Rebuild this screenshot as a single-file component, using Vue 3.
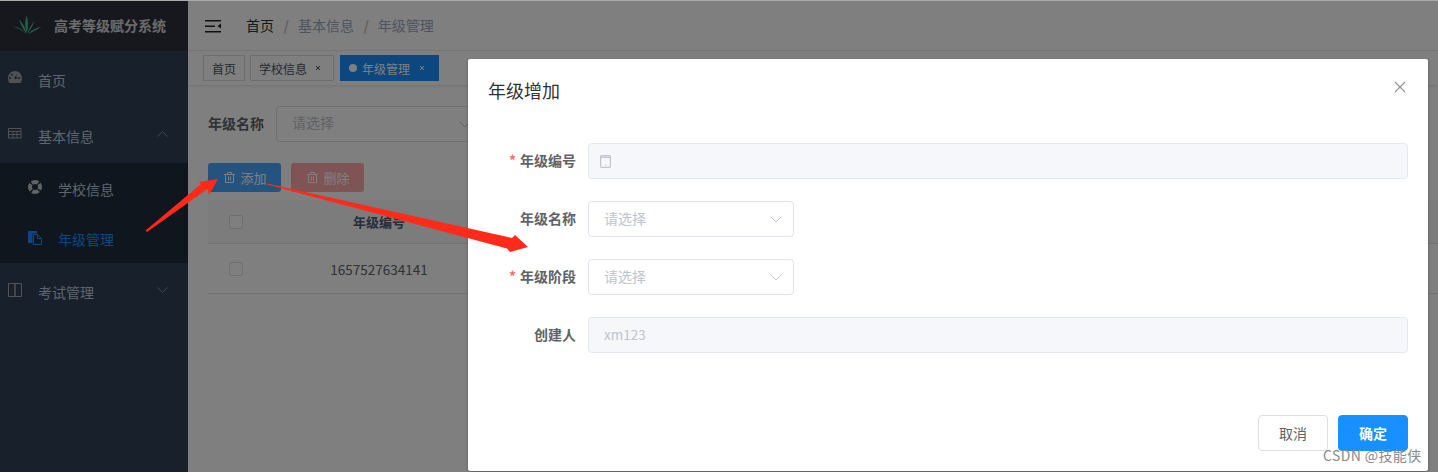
<script setup>
const crumbs = ['基本信息', '年级管理']
</script>

<template>
  <div class="page">
    <aside class="side">
      <div class="logo">
        <svg class="logo-mark" width="30" height="20" viewBox="0 0 30 20">
          <g fill="#46c898">
            <path d="M15 18C12.500 11 13 6 14.800 .5 16 6 16.500 11 15 18Z" />
            <path d="M14.500 18.500C11 14 9 10 7 4.500 10.500 8.500 13.500 12 14.500 18.500Z" />
            <path d="M15.500 18.500C17 13 19.500 10 22.500 5.500 21 10.500 18.500 14.500 15.500 18.500Z" />
            <path d="M14 19C10 15 6 12.500 0 11.500 6 11.500 11 14.500 14 19Z" />
            <path d="M16 19C20 15 24 12.500 29.500 12 24.500 14.500 20.500 17 16 19Z" />
          </g>
        </svg>
        <span class="logo-text">高考等级赋分系统</span>
      </div>
      <nav class="nav">
        <div class="item">
          <svg class="ico" width="14" height="12" viewBox="0 0 14 12"><path fill="#a0a4ab" fill-rule="evenodd" d="M7 0a7 7 0 0 1 7 7c0 1.800-.5 3.500-1.500 5H1.500A7.500 7.500 0 0 1 0 7a7 7 0 0 1 7-7ZM7.800 5.500 9.500 2.500 6.500 6.200a1.300 1.300 0 1 0 1.300-.7ZM2.500 6.200a1 1 0 1 0 0 1.800 1 1 0 0 0 0-1.800Zm9 0a1 1 0 1 0 0 1.800 1 1 0 0 0 0-1.800ZM4.500 3a1 1 0 1 0 0 1.600A1 1 0 0 0 4.500 3Z" /></svg>
          <span>首页</span>
        </div>
        <div class="item">
          <svg class="ico" width="14" height="12" viewBox="0 0 14 12"><path fill="none" stroke="#a0a4ab" d="M.5 1.500h12.500v9.500H.5ZM.5 4.500h12.500M.5 7.500h12.500M5 4.500V11M9 4.500V11" /></svg>
          <span>基本信息</span>
          <svg class="caret" width="11" height="6" viewBox="0 0 11 6"><path fill="none" stroke="#8d9096" d="M.5 5.500 5.500.7l5 4.800" /></svg>
        </div>
        <div class="sub">
          <div class="sub-item">
            <svg class="sub-ico" width="14" height="14" viewBox="0 0 14 14"><circle cx="7" cy="7" r="5" fill="none" stroke="#c4c6c9" stroke-width="4" stroke-dasharray="6.500 1.350" stroke-dashoffset="3.900" /></svg>
            <span>学校信息</span>
          </div>
          <div class="sub-item active">
            <svg class="sub-ico" width="14" height="15" viewBox="0 0 14 15"><path fill="#1890ff" d="M0 1h9v2.500H4.500V13H0Z" /><path fill="none" stroke="#1890ff" d="M5.500 4.500h4l4 4v6h-8ZM9.500 4.500v4h4" /></svg>
            <span>年级管理</span>
          </div>
        </div>
        <div class="item">
          <svg class="ico" width="14" height="14" viewBox="0 0 14 14"><path fill="none" stroke="#a0a4ab" d="M.5 .5h6.500v13H.5ZM7 .5h6.500v13H7Z" /></svg>
          <span>考试管理</span>
          <svg class="caret" width="11" height="6" viewBox="0 0 11 6"><path fill="none" stroke="#8d9096" d="M.5 .5l5 4.800 5-4.800" /></svg>
        </div>
      </nav>
    </aside>

    <main class="main">
      <header class="top">
        <svg class="burger" width="16" height="13" viewBox="0 0 16 13"><path fill="#222" d="M0 0h16v1.500H0ZM0 5.500h10V7H0ZM0 11h16v1.500H0ZM16 3.500v5l-3.500-2.500Z" /></svg>
        <div class="crumbs">
          <span class="crumb-home">首页</span>
          <template v-for="c in crumbs" :key="c">
            <span class="sep">/</span>
            <span class="crumb">{{ c }}</span>
          </template>
        </div>
      </header>
      <div class="tags">
        <span class="tag">首页</span>
        <span class="tag">学校信息<svg class="x" width="6" height="6" viewBox="0 0 6 6"><path fill="none" stroke="#495060" d="M1 1l4 4M5 1 1 5" /></svg></span>
        <span class="tag on"><b class="dot"></b>年级管理<svg class="x" width="6" height="6" viewBox="0 0 6 6"><path fill="none" stroke="#fff" d="M1 1l4 4M5 1 1 5" /></svg></span>
      </div>
      <section class="body">
        <div class="filter">
          <label class="flabel">年级名称</label>
          <div class="fselect">
            <span>请选择</span>
            <svg width="12" height="7" viewBox="0 0 12 7"><path fill="none" stroke="#c0c4cc" d="M.5 .5l5.500 5.500L11.500 .5" /></svg>
          </div>
        </div>
        <div class="ops">
          <button class="op add">
            <svg width="11" height="11" viewBox="0 0 11 11"><path fill="none" stroke="#fff" d="M0 2.500h11M3.500 2.500V.5h4v2M1.500 2.500v8h8v-8M4.500 4.500v4M6.500 4.500v4" /></svg>
            添加
          </button>
          <button class="op del">
            <svg width="11" height="11" viewBox="0 0 11 11"><path fill="none" stroke="#fff" d="M0 2.500h11M3.500 2.500V.5h4v2M1.500 2.500v8h8v-8M4.500 4.500v4M6.500 4.500v4" /></svg>
            删除
          </button>
        </div>
        <div class="table">
          <div class="row head">
            <div class="c0"><span class="check"></span></div>
            <div class="c1">年级编号</div>
          </div>
          <div class="row">
            <div class="c0"><span class="check"></span></div>
            <div class="c1 num">1657527634141</div>
          </div>
        </div>
      </section>
    </main>

    <div class="mask"></div>

    <div class="dialog">
      <div class="d-head">
        <span class="d-title">年级增加</span>
        <svg class="d-close" width="12" height="12" viewBox="0 0 12 12"><path fill="none" stroke="#909399" stroke-width="1.100" d="M1 1l10 10M11 1 1 11" /></svg>
      </div>
      <form class="d-form">
        <div class="f-row">
          <label class="f-label"><em>*</em>年级编号</label>
          <div class="input disabled">
            <svg width="11" height="13" viewBox="0 0 11 13"><path fill="none" stroke="#c0c4cc" stroke-width="1.200" d="M1.700 .6h7.600a1.100 1.100 0 0 1 1.100 1.100v9.600a1.100 1.100 0 0 1-1.100 1.100H1.700a1.100 1.100 0 0 1-1.100-1.100V1.700A1.100 1.100 0 0 1 1.700 .6ZM1 2.300h9" /><path fill="#c0c4cc" d="M5 9.500h1.200v1.200H5Z" /></svg>
          </div>
        </div>
        <div class="f-row">
          <label class="f-label">年级名称</label>
          <div class="input select">
            <span>请选择</span>
            <svg width="12" height="7" viewBox="0 0 12 7"><path fill="none" stroke="#c0c4cc" d="M.5 .5l5.500 5.500L11.500 .5" /></svg>
          </div>
        </div>
        <div class="f-row">
          <label class="f-label"><em>*</em>年级阶段</label>
          <div class="input select">
            <span>请选择</span>
            <svg width="12" height="7" viewBox="0 0 12 7"><path fill="none" stroke="#c0c4cc" d="M.5 .5l5.500 5.500L11.500 .5" /></svg>
          </div>
        </div>
        <div class="f-row">
          <label class="f-label">创建人</label>
          <div class="input disabled"><span class="val">xm123</span></div>
        </div>
      </form>
      <div class="d-foot">
        <button class="btn">取消</button>
        <button class="btn primary">确定</button>
      </div>
    </div>

    <svg class="arrows" width="1438" height="472" viewBox="0 0 1438 472">
      <path fill="#ff2a1a" d="M145.500 230.500 201 184 199 182 218 179 209 195 207.500 189 147 232Z" />
      <path fill="#ff2a1a" d="M267 183.500 512 238 515 235 528 247 510 252 507 248.500 267 184.500Z" />
    </svg>

    <div class="mark">CSDN @技能侠</div>
  </div>
</template>

<style>
html, body { margin: 0; background: #fff; }
</style>

<style scoped>
.page {
  position: relative;
  display: flex;
  width: 1438px;
  height: 472px;
  overflow: hidden;
  font-family: "Noto Sans CJK SC", "Noto Sans", sans-serif;
  font-size: 14px;
  color: #606266;
  border-top: 1px solid #aaa;
  box-sizing: border-box;
}
.side { width: 188px; flex: none; background: #304156; color: #bfcbd9; }
.logo { height: 50px; background: #2e303d; display: flex; align-items: center; padding-left: 12px; gap: 13px; }
.logo-mark { flex: none; margin-top: -2px; }
.logo-text { color: #d7d7d7; font-size: 14px; font-weight: 700; white-space: nowrap; padding-bottom: 3px; margin-left: -1px; }
.nav { display: flex; flex-direction: column; }
.item { height: 56px; display: flex; align-items: center; position: relative; padding-left: 38px; font-size: 14px; }
.item > span { padding-top: 2px; }
.ico { position: absolute; left: 8px; top: 20px; }
.caret { position: absolute; right: 20px; top: 24px; }
.sub { background: #1f2d3d; height: 100px; }
.sub-item { height: 50px; display: flex; align-items: center; padding-left: 58px; position: relative; }
.sub-item > span { padding-top: 2px; }
.sub-ico { position: absolute; left: 28px; top: 17px; }
.sub-item.active { color: #1890ff; }
.main { flex: 1; min-width: 0; background: #fff; display: flex; flex-direction: column; }
.top { height: 50px; flex: none; display: flex; align-items: center; padding-left: 17px; border-bottom: 1px solid #eef0f3; box-sizing: border-box; }
.burger { flex: none; margin-top: 1px; }
.crumbs { margin-left: 25px; display: flex; align-items: center; color: #97a8be; padding-bottom: 2px; }
.crumb-home { color: #303133; }
.sep { margin: 0 9px 0 9.500px; color: #c0c4cc; font-weight: 700; }
.tags { height: 34px; flex: none; display: flex; align-items: center; gap: 5px; padding-left: 15px; box-sizing: border-box; box-shadow: 0 1px 3px rgba(0, 0, 0, .12); }
.tag { height: 26px; box-sizing: border-box; border: 1px solid #d8dce5; color: #495060; font-size: 12px; display: flex; align-items: center; padding: 0 8px; white-space: nowrap; }
.tag.on { background: #1890ff; border-color: #1890ff; color: #fff; margin-left: 1px; }
.dot { width: 8px; height: 8px; background: #fff; border-radius: 50%; margin-right: 5px; }
.x { margin-left: 8px; margin-right: 4px; flex: none; }
.on .x { margin-left: 9px; margin-right: 5px; }
.body { padding: 21px 0 0 20px; flex: 1; }
.filter { display: flex; align-items: center; height: 36px; }
.flabel { width: 68px; font-weight: 700; font-size: 14px; color: #606266; padding-bottom: 2px; }
.fselect { width: 206px; height: 36px; box-sizing: border-box; border: 1px solid #dcdfe6; border-radius: 4px; display: flex; align-items: center; justify-content: space-between; padding: 0 10px 0 15px; color: #c0c4cc; font-size: 14px; }
.fselect span { padding-bottom: 4px; }
.ops { display: flex; gap: 10px; margin-top: 21px; }
.op { width: 73px; height: 29px; border: 0; border-radius: 3px; color: #fff; font: inherit; font-size: 13px; display: flex; align-items: center; justify-content: center; gap: 5px; padding: 0 0 0 2px; }
.add { background: #4aa6ff; }
.del { background: #ffa8a8; }
.table { margin-top: 8px; }
.row { display: flex; height: 50px; box-sizing: border-box; align-items: center; border-bottom: 1px solid #dfe6ec; }
.row.head { height: 44px; background: #f8f8f9; color: #515a6e; font-weight: 700; font-size: 13px; }
.row.head .c1 { padding-bottom: 1px; }
.c0 { width: 56px; display: flex; justify-content: center; }
.c1 { width: 230px; text-align: center; }
.num { color: #606266; font-size: 13.500px; }
.check { width: 14px; height: 14px; box-sizing: border-box; border: 1px solid #dcdfe6; border-radius: 2px; background: #fff; display: block; }
.mask { position: absolute; inset: 0; background: rgba(0, 0, 0, .5); }
.dialog { position: absolute; left: 468px; top: 58px; width: 960px; height: 412px; background: #fff; display: flex; flex-direction: column; border-radius: 2px; box-shadow: 0 1px 3px rgba(0, 0, 0, .3); }
.d-head { height: 64px; flex: none; padding: 19px 20px 0; box-sizing: border-box; display: flex; justify-content: space-between; position: relative; }
.d-title { font-size: 18px; line-height: 24px; color: #303133; }
.d-close { margin: 3px 2px 0 0; }
.d-form { flex: 1; padding: 20px 20px 0 0; display: flex; flex-direction: column; gap: 22px; }
.f-row { display: flex; height: 36px; align-items: center; }
.f-label { width: 108px; flex: none; margin-right: 12px; text-align: right; font-weight: 700; font-size: 14px; color: #606266; padding-bottom: 2px; }
.f-label em { color: #f56c6c; font-style: normal; margin-right: 4px; }
.input { height: 36px; box-sizing: border-box; border: 1px solid #dfe4ed; border-radius: 4px; display: flex; align-items: center; padding: 0 15px; font-size: 14px; color: #c0c4cc; }
.input span { padding-bottom: 2px; }
.disabled { flex: 1; background: #f5f7fa; border-color: #e4e7ed; }
.disabled svg { margin-left: -4px; }
.val { font-size: 13.500px; }
.select { width: 206px; justify-content: space-between; padding-right: 11px; }
.d-foot { display: flex; justify-content: flex-end; gap: 10px; padding: 0 20px 20px; }
.btn { width: 70px; height: 36px; border: 1px solid #dcdfe6; border-radius: 4px; background: #fff; color: #606266; font: inherit; font-size: 14px; padding: 0; }
.btn.primary { background: #1890ff; border-color: #1890ff; color: #fff; font-weight: 700; }
.arrows { position: absolute; left: 0; top: -1px; pointer-events: none; }
.mark { position: absolute; left: 1323px; top: 445px; font-size: 14px; line-height: 18px; color: #8a8a8a; letter-spacing: .4px; white-space: nowrap; }
</style>
